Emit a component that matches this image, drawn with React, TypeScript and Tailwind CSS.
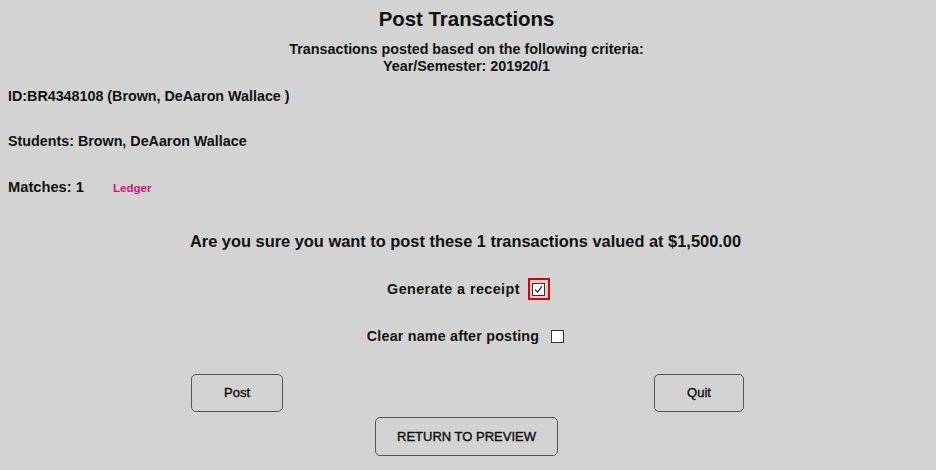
export default function App() {
  return (
    <main className="w-[936px] h-[470px] bg-[#d3d3d3] text-[#111] font-['Liberation_Sans',Arial,sans-serif] font-bold overflow-hidden">
      <h1 className="pt-[7px] pr-[3px] text-center text-[20.4px] leading-[24px]">Post Transactions</h1>
      <div className="mt-[10px] pr-[3px] text-center text-[14.3px] leading-[17px]">
        <p>Transactions posted based on the following criteria:</p>
        <p>Year/Semester: 201920/1</p>
      </div>
      <div className="pl-2 text-[14.3px] leading-[17px]">
        <p className="mt-[13px]">ID:BR4348108 (Brown, DeAaron Wallace )</p>
        <p className="mt-[28px]">Students: Brown, DeAaron Wallace</p>
        <div className="mt-[29px] flex items-center">
          <span className="text-[14.7px]">Matches: 1</span>
          <a className="ml-[29px] text-[11.6px] text-[#d4137f] cursor-pointer">Ledger</a>
        </div>
      </div>
      <p className="mt-[35px] pr-[5px] text-center text-[16.4px] leading-[20px]">
        Are you sure you want to post these 1 transactions valued at $1,500.00
      </p>
      <div className="mt-[27px] flex justify-center items-center gap-[8px] text-[14.3px] tracking-[0.45px] leading-[22px] pl-[1px]">
        <span>Generate a receipt</span>
        <span className="w-[22px] h-[22px] border-2 border-[#e00000] flex items-center justify-center">
          <span className="w-[13px] h-[13px] border border-[#333] bg-white flex items-center justify-center">
            <svg width="11" height="11" viewBox="0 0 11 11" fill="none">
              <path d="M2 5.5 L4.5 8 L9 2.5" stroke="#333" strokeWidth="1.2" />
            </svg>
          </span>
        </span>
      </div>
      <div className="mt-[25px] flex justify-center items-center gap-[12px] text-[14.3px] tracking-[0.2px] leading-[22px] pr-[5px]">
        <span>Clear name after posting</span>
        <span className="w-[13px] h-[13px] border border-[#333] bg-white" />
      </div>
      <div className="mt-[27px] flex justify-between pl-[191px] pr-[192px]">
        <button className="w-[92px] h-[38px] border border-[#555] rounded-[5px] bg-[#d3d3d3] text-[13px] font-normal [-webkit-text-stroke:0.4px_#111]">Post</button>
        <button className="w-[90px] h-[38px] border border-[#555] rounded-[5px] bg-[#d3d3d3] text-[13px] font-normal [-webkit-text-stroke:0.4px_#111]">Quit</button>
      </div>
      <div className="mt-[5px] flex justify-center pr-[3px]">
        <button className="w-[183px] h-[39px] border border-[#555] rounded-[5px] bg-[#d3d3d3] text-[13px] font-normal [-webkit-text-stroke:0.4px_#111]">RETURN TO PREVIEW</button>
      </div>
    </main>
  );
}
